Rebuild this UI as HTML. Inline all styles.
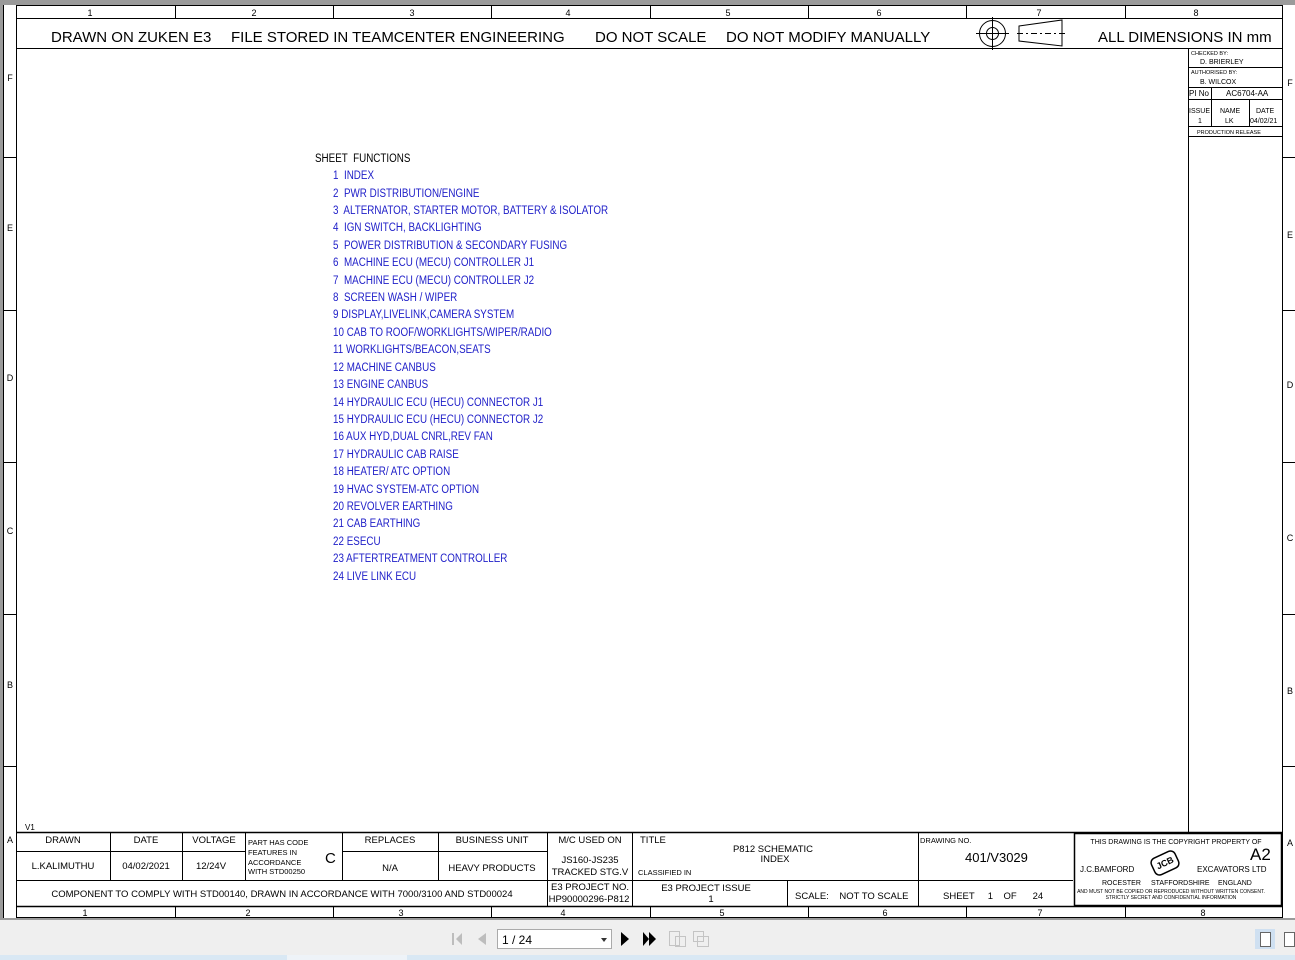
<!DOCTYPE html>
<html><head><meta charset="utf-8"><style>
html,body{margin:0;padding:0;width:1295px;height:960px;overflow:hidden;background:#e9e9e9}
svg{display:block}
text{font-family:"Liberation Sans",sans-serif;fill:#000;white-space:pre}
.c text{font-size:12px;fill:#1d1dc8}
.t{font-size:7px}
</style></head><body>
<svg width="1295" height="960" viewBox="0 0 1295 960" xmlns="http://www.w3.org/2000/svg">
<rect x="0" y="0" width="1295" height="920" fill="#9a9a9a"/>
<rect x="3" y="5" width="1292" height="913" fill="#fff"/>
<g stroke="#000" fill="none" stroke-width="1">
<line x1="3.5" y1="5" x2="3.5" y2="918"/>
<rect x="16.5" y="5.5" width="1266" height="912"/>
<line x1="16" y1="18.5" x2="1282" y2="18.5"/>
<line x1="16" y1="48.5" x2="1282" y2="48.5"/>
<line x1="16" y1="832.5" x2="1282" y2="832.5" stroke-width="1.5"/>
<line x1="16" y1="906.5" x2="1282" y2="906.5" stroke-width="1.5"/>
<g>
<line x1="175.5" y1="5" x2="175.5" y2="18"/><line x1="333.5" y1="5" x2="333.5" y2="18"/><line x1="491.5" y1="5" x2="491.5" y2="18"/><line x1="650.5" y1="5" x2="650.5" y2="18"/><line x1="808.5" y1="5" x2="808.5" y2="18"/><line x1="966.5" y1="5" x2="966.5" y2="18"/><line x1="1125.5" y1="5" x2="1125.5" y2="18"/>
<line x1="175.5" y1="906" x2="175.5" y2="918"/><line x1="333.5" y1="906" x2="333.5" y2="918"/><line x1="491.5" y1="906" x2="491.5" y2="918"/><line x1="650.5" y1="906" x2="650.5" y2="918"/><line x1="808.5" y1="906" x2="808.5" y2="918"/><line x1="966.5" y1="906" x2="966.5" y2="918"/><line x1="1125.5" y1="906" x2="1125.5" y2="918"/>
</g>
<g>
<line x1="3" y1="157.5" x2="16" y2="157.5"/><line x1="3" y1="310.5" x2="16" y2="310.5"/><line x1="3" y1="462.5" x2="16" y2="462.5"/><line x1="3" y1="614.5" x2="16" y2="614.5"/><line x1="3" y1="766.5" x2="16" y2="766.5"/>
<line x1="1282" y1="157.5" x2="1295" y2="157.5"/><line x1="1282" y1="310.5" x2="1295" y2="310.5"/><line x1="1282" y1="462.5" x2="1295" y2="462.5"/><line x1="1282" y1="614.5" x2="1295" y2="614.5"/><line x1="1282" y1="766.5" x2="1295" y2="766.5"/>
</g>
<line x1="1188.5" y1="48" x2="1188.5" y2="832"/>
<line x1="1188" y1="67.5" x2="1282" y2="67.5"/>
<line x1="1188" y1="87.5" x2="1282" y2="87.5"/>
<line x1="1188" y1="99.5" x2="1282" y2="99.5"/>
<line x1="1211.5" y1="87" x2="1211.5" y2="127"/>
<line x1="1249.5" y1="99" x2="1249.5" y2="127"/>
<line x1="1188" y1="126.5" x2="1282" y2="126.5"/>
<line x1="1188" y1="136.5" x2="1282" y2="136.5"/>
<line x1="110.5" y1="832" x2="110.5" y2="880"/>
<line x1="182.5" y1="832" x2="182.5" y2="880"/>
<line x1="245.5" y1="832" x2="245.5" y2="880"/>
<line x1="342.5" y1="832" x2="342.5" y2="880"/>
<line x1="438.5" y1="832" x2="438.5" y2="880"/>
<line x1="547.5" y1="832" x2="547.5" y2="906"/>
<line x1="632.5" y1="832" x2="632.5" y2="906"/>
<line x1="918.5" y1="832" x2="918.5" y2="906"/>
<line x1="787.5" y1="880" x2="787.5" y2="906"/>
<line x1="16" y1="851.5" x2="245" y2="851.5"/>
<line x1="342" y1="851.5" x2="547" y2="851.5"/>
<line x1="16" y1="880.5" x2="1073" y2="880.5"/>
<rect x="1074.5" y="833.5" width="207" height="72" stroke-width="1.5"/>
<circle cx="992.5" cy="33.5" r="13"/><circle cx="992.5" cy="33.5" r="6"/>
<line x1="976" y1="33.5" x2="1009" y2="33.5"/><line x1="992.5" y1="17" x2="992.5" y2="50"/>
<polygon points="1019,26 1062,20 1062,46 1019,41"/>
<line x1="1017" y1="33.5" x2="1065" y2="33.5" stroke-dasharray="6,3,2,3"/>
</g>
<g font-size="9" text-anchor="middle">
<text x="90" y="16">1</text><text x="254" y="16">2</text><text x="412" y="16">3</text><text x="568" y="16">4</text><text x="728" y="16">5</text><text x="879" y="16">6</text><text x="1039" y="16">7</text><text x="1196" y="16">8</text>
<text x="85" y="916">1</text><text x="248" y="916">2</text><text x="401" y="916">3</text><text x="563" y="916">4</text><text x="722" y="916">5</text><text x="885" y="916">6</text><text x="1040" y="916">7</text><text x="1203" y="916">8</text>
<text x="10" y="81">F</text><text x="10" y="231">E</text><text x="10" y="381">D</text><text x="10" y="534">C</text><text x="10" y="688">B</text><text x="10" y="843">A</text>
<text x="1290" y="86">F</text><text x="1290" y="238">E</text><text x="1290" y="388">D</text><text x="1290" y="541">C</text><text x="1290" y="694">B</text><text x="1290" y="846">A</text>
</g>
<g font-size="15">
<text x="51" y="42">DRAWN ON ZUKEN E3</text>
<text x="231" y="42">FILE STORED IN TEAMCENTER ENGINEERING</text>
<text x="595" y="42">DO NOT SCALE</text>
<text x="726" y="42">DO NOT MODIFY MANUALLY</text>
<text x="1098" y="42">ALL DIMENSIONS IN mm</text>
</g>
<g class="t">
<text x="1191" y="55" font-size="5.5">CHECKED BY:</text>
<text x="1200" y="64">D. BRIERLEY</text>
<text x="1191" y="74" font-size="5.5">AUTHORISED BY:</text>
<text x="1200" y="84">B. WILCOX</text>
<text x="1189" y="96" font-size="8">PI No</text>
<text x="1226" y="96" font-size="8">AC6704-AA</text>
<text x="1189" y="113">ISSUE</text><text x="1220" y="113">NAME</text><text x="1256" y="113">DATE</text>
<text x="1198" y="123">1</text><text x="1225" y="123">LK</text><text x="1250" y="123">04/02/21</text>
<text x="1197" y="134" font-size="5.5">PRODUCTION RELEASE</text>
</g>
<g transform="translate(315,0) scale(0.82,1)">
<text x="0" y="162" font-size="12">SHEET  FUNCTIONS</text>
<g class="c">
<text x="22" y="179">1  INDEX</text>
<text x="22" y="197">2  PWR DISTRIBUTION/ENGINE</text>
<text x="22" y="214">3  ALTERNATOR, STARTER MOTOR, BATTERY &amp; ISOLATOR</text>
<text x="22" y="231">4  IGN SWITCH, BACKLIGHTING</text>
<text x="22" y="249">5  POWER DISTRIBUTION &amp; SECONDARY FUSING</text>
<text x="22" y="266">6  MACHINE ECU (MECU) CONTROLLER J1</text>
<text x="22" y="284">7  MACHINE ECU (MECU) CONTROLLER J2</text>
<text x="22" y="301">8  SCREEN WASH / WIPER</text>
<text x="22" y="318">9 DISPLAY,LIVELINK,CAMERA SYSTEM</text>
<text x="22" y="336">10 CAB TO ROOF/WORKLIGHTS/WIPER/RADIO</text>
<text x="22" y="353">11 WORKLIGHTS/BEACON,SEATS</text>
<text x="22" y="371">12 MACHINE CANBUS</text>
<text x="22" y="388">13 ENGINE CANBUS</text>
<text x="22" y="406">14 HYDRAULIC ECU (HECU) CONNECTOR J1</text>
<text x="22" y="423">15 HYDRAULIC ECU (HECU) CONNECTOR J2</text>
<text x="22" y="440">16 AUX HYD,DUAL CNRL,REV FAN</text>
<text x="22" y="458">17 HYDRAULIC CAB RAISE</text>
<text x="22" y="475">18 HEATER/ ATC OPTION</text>
<text x="22" y="493">19 HVAC SYSTEM-ATC OPTION</text>
<text x="22" y="510">20 REVOLVER EARTHING</text>
<text x="22" y="527">21 CAB EARTHING</text>
<text x="22" y="545">22 ESECU</text>
<text x="22" y="562">23 AFTERTREATMENT CONTROLLER</text>
<text x="22" y="580">24 LIVE LINK ECU</text>
</g></g>
<text x="25" y="830" font-size="8">V1</text>
<g font-size="9.5" text-anchor="middle">
<text x="63" y="843">DRAWN</text><text x="146" y="843">DATE</text><text x="214" y="843">VOLTAGE</text>
<text x="390" y="843">REPLACES</text><text x="492" y="843">BUSINESS UNIT</text><text x="590" y="843">M/C USED ON</text>
<text x="63" y="869">L.KALIMUTHU</text><text x="146" y="869">04/02/2021</text><text x="211" y="869">12/24V</text>
<text x="390" y="871">N/A</text><text x="492" y="871">HEAVY PRODUCTS</text>
<text x="590" y="863">JS160-JS235</text><text x="590" y="875">TRACKED STG.V</text>
<text x="282" y="897">COMPONENT TO COMPLY WITH STD00140, DRAWN IN ACCORDANCE WITH 7000/3100 AND STD00024</text>
<text x="590" y="890">E3 PROJECT NO.</text><text x="589" y="902">HP90000296-P812</text>
<text x="706" y="891">E3 PROJECT ISSUE</text><text x="711" y="902">1</text>
<text x="773" y="852">P812 SCHEMATIC</text><text x="775" y="862">INDEX</text>
</g>
<g font-size="7.5">
<text x="248" y="845">PART HAS CODE</text><text x="248" y="855">FEATURES IN</text><text x="248" y="865">ACCORDANCE</text><text x="248" y="874">WITH STD00250</text>
<text x="638" y="875">CLASSIFIED IN</text>
<text x="920" y="843">DRAWING NO.</text>
</g>
<text x="325" y="863" font-size="15">C</text>
<text x="640" y="843" font-size="9.5">TITLE</text>
<text x="965" y="862" font-size="13">401/V3029</text>
<text x="795" y="899" font-size="9.5">SCALE:    NOT TO SCALE</text>
<text x="943" y="899" font-size="9.5">SHEET     1    OF      24</text>
<text x="1176" y="844" font-size="7" text-anchor="middle">THIS DRAWING IS THE COPYRIGHT PROPERTY OF</text>
<text x="1250" y="860" font-size="17">A2</text>
<text x="1080" y="872" font-size="8">J.C.BAMFORD</text>
<text x="1197" y="872" font-size="8">EXCAVATORS LTD</text>
<text x="1102" y="885" font-size="7">ROCESTER</text><text x="1151" y="885" font-size="7">STAFFORDSHIRE</text><text x="1218" y="885" font-size="7">ENGLAND</text>
<text x="1171" y="893" font-size="5" text-anchor="middle">AND MUST NOT BE COPIED OR REPRODUCED WITHOUT WRITTEN CONSENT.</text>
<text x="1171" y="899" font-size="5" text-anchor="middle">STRICTLY SECRET AND CONFIDENTIAL INFORMATION</text>
<g transform="translate(1165,863) rotate(-25)"><rect x="-13" y="-9" width="26" height="18" rx="5" fill="#fff" stroke="#000" stroke-width="1.5"/><text x="0" y="3" font-size="9" font-weight="bold" text-anchor="middle">JCB</text></g>
<rect x="0" y="920" width="1295" height="35" fill="#efefef"/>
<rect x="0" y="955" width="1295" height="5" fill="#d9e8f4"/>
<rect x="287" y="955" width="120" height="5" fill="#eef3f8"/>
<g fill="#bdbdbd">
<rect x="452" y="933" width="2" height="12"/><polygon points="462,933 456,939 462,945"/>
<polygon points="486,933 478,939 486,945"/>
</g>
<rect x="497.5" y="929.5" width="114" height="19" fill="#fff" stroke="#aaa"/>
<text x="502" y="944" font-size="12">1 / 24</text>
<polygon points="601,938 607,938 604,942" fill="#333"/>
<polygon points="621,932 629,939 621,946" fill="#000"/>
<polygon points="643,932 649,939 643,946" fill="#000"/><polygon points="649,932 656,939 649,946" fill="#000"/>
<g fill="none" stroke="#c4c4c4"><rect x="669.5" y="931.5" width="10" height="14"/><rect x="675.5" y="936.5" width="10" height="10"/><rect x="693.5" y="931.5" width="10" height="10"/><rect x="697.5" y="936.5" width="11" height="10"/></g>
<rect x="1255" y="929" width="20" height="20" fill="#cfe0f1"/>
<rect x="1260.5" y="932.5" width="10" height="14" fill="#fff" stroke="#666"/>
<rect x="1284.5" y="932.5" width="10" height="14" fill="#fff" stroke="#666"/>
</svg>
</body></html>
